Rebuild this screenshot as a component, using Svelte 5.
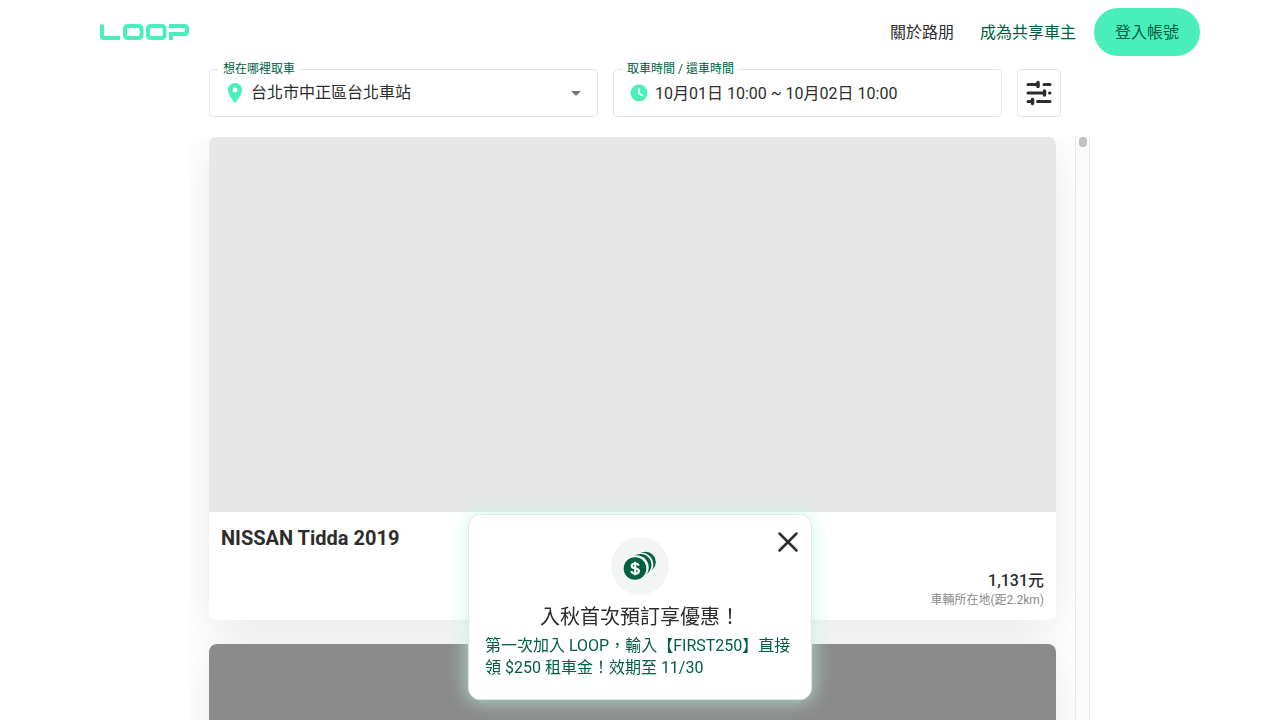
<script>
  let location = $state('taipei');
  let promoOpen = $state(true);
  const cars = [
    { name: 'NISSAN Tidda 2019', price: '1,131元', place: '車輛所在地(距2.2km)', tone: 'light' },
    { tone: 'dark' }
  ];
</script>

<div class="page">
  <header>
    <a class="logo" href="#home" aria-label="LOOP">
      <svg width="90" height="17" viewBox="0 0 90 17" fill="none" stroke="#4aefbb" stroke-width="4">
        <path d="M2 0.500V12.500Q2 14 3.500 14H20" />
        <rect x="25" y="2" width="16.500" height="12" rx="2.500" />
        <rect x="48" y="2" width="16.500" height="12" rx="2.500" />
        <path d="M69 2H84.500Q87 2 87 4.500V7.500Q87 10 84.500 10H71V16" />
      </svg>
    </a>
    <nav>
      <a href="#about">關於路朋</a>
      <a class="green" href="#owner">成為共享車主</a>
      <button class="login" type="button">登入帳號</button>
    </nav>
  </header>

  <main>
    <form class="search">
      <fieldset>
        <legend><label for="place">想在哪裡取車</label></legend>
        <svg width="24" height="24" viewBox="0 0 24 24" fill="#4aefbb">
          <path d="M12 2C8.130 2 5 5.130 5 9c0 5.250 7 13 7 13s7-7.750 7-13c0-3.870-3.130-7-7-7zm0 9.500a2.500 2.500 0 1 1 0-5 2.500 2.500 0 0 1 0 5z" />
        </svg>
        <select id="place" bind:value={location}>
          <option value="taipei">台北市中正區台北車站</option>
        </select>
        <svg width="24" height="24" viewBox="0 0 24 24" fill="#757575"><path d="M7 10l5 5 5-5z" /></svg>
      </fieldset>
      <fieldset>
        <legend><label for="time">取車時間 / 還車時間</label></legend>
        <svg width="24" height="24" viewBox="0 0 24 24">
          <circle cx="12" cy="12" r="8.500" fill="#4aefbb" />
          <path d="M12 7v5.500l4 2.200" fill="none" stroke="#fff" stroke-width="1.600" />
        </svg>
        <input id="time" type="text" readonly value="10月01日 10:00 ~ 10月02日 10:00" />
      </fieldset>
      <button class="filter" type="button" aria-label="篩選">
        <svg width="26" height="26" viewBox="0 0 26 26" fill="none" stroke="#2d2d2d" stroke-width="3" stroke-linecap="round">
          <path d="M2 4.500H12M18 4.500H24M2 13H18.500M23.500 13H24M2 21.500H6M11.500 21.500H24" />
          <path d="M12 2.500V6.500M18.500 11V15M6.500 19.500V23.500" stroke-width="3.500" />
        </svg>
      </button>
    </form>

    <div class="results">
      <div class="list">
        {#each cars as car}
          <article>
            <div class="photo {car.tone}"></div>
            {#if car.name}
              <div class="info">
                <h2>{car.name}</h2>
                <div class="cost">
                  <strong>{car.price}</strong>
                  <span>{car.place}</span>
                </div>
              </div>
            {/if}
          </article>
        {/each}
      </div>
      <div class="track"><div class="thumb"></div></div>
    </div>
  </main>

  {#if promoOpen}
    <aside>
      <button class="close" type="button" aria-label="關閉" onclick={() => (promoOpen = false)}>
        <svg width="20" height="20" viewBox="0 0 20 20" fill="none" stroke="#2d2d2d" stroke-width="2.500" stroke-linecap="round">
          <path d="M1.500 1.500l17 17M18.500 1.500l-17 17" />
        </svg>
      </button>
      <div class="coin">
        <svg width="34" height="30" viewBox="0 0 34 30" fill="#00603f">
          <circle cx="22.500" cy="11" r="10.300" />
          <circle cx="18.500" cy="13.500" r="11.800" fill="#f3f5f5" />
          <circle cx="17.500" cy="14" r="10.900" />
          <circle cx="13.500" cy="16.500" r="12.200" fill="#f3f5f5" />
          <circle cx="12" cy="17.500" r="11.300" />
          <path d="M15.700 14.700C15.200 13.100 13.800 12.500 12.200 12.500c-2 0-3.500.9-3.500 2.500 0 3.300 7.200 1.500 7.200 4.900 0 1.700-1.600 2.600-3.600 2.600-2.200 0-3.600-.9-4-2.600M12.200 10.700v13.600" fill="none" stroke="#f3f5f5" stroke-width="2.200" />
        </svg>
      </div>
      <h3>入秋首次預訂享優惠！</h3>
      <p>第一次加入 LOOP，輸入【FIRST250】直接領 $250 租車金！效期至 11/30</p>
    </aside>
  {/if}
</div>

<style>
  :global(body) {
    background: #fff;
  }
  .page,
  .page * {
    box-sizing: border-box;
  }
  .page {
    height: 100vh;
    display: flex;
    flex-direction: column;
    overflow: hidden;
    color: #2d2d2d;
    font-family: Roboto, 'Noto Sans CJK TC', sans-serif;
    font-size: 16px;
    line-height: 22px;
  }
  button,
  input,
  select {
    font: inherit;
    color: inherit;
    border: 0;
    background: none;
    padding: 0;
    margin: 0;
    outline: 0;
  }
  button {
    cursor: pointer;
  }
  svg {
    display: block;
    flex: none;
  }
  header {
    height: 64px;
    flex: none;
    display: flex;
    align-items: center;
    justify-content: space-between;
    padding: 0 80px 0 100px;
  }
  nav {
    display: flex;
    align-items: center;
    gap: 26px;
  }
  nav a {
    padding-top: 2px;
    color: #2d2d2d;
    text-decoration: none;
  }
  nav .green {
    color: #00603f;
  }
  .login {
    height: 48px;
    margin-left: -8px;
    padding: 2px 21px 0;
    border-radius: 24px;
    background: #4aefbb;
    color: #00603f;
  }
  main {
    flex: 1;
    min-height: 0;
    width: 100%;
    max-width: 900px;
    margin: 0 auto;
    display: flex;
    flex-direction: column;
  }
  .search {
    display: flex;
    align-items: flex-end;
    gap: 15px;
    margin: 0 29px 20px 19px;
  }
  fieldset {
    flex: 1;
    min-width: 0;
    height: 53px;
    margin: 0;
    padding: 0 9px 4px 13px;
    border: 1px solid #e5e5e5;
    border-radius: 4px;
    display: flex;
    align-items: center;
    gap: 4px;
  }
  legend {
    height: 10px;
    margin-left: -5px;
    padding: 0 5px;
    font-size: 12px;
    line-height: 10px;
    color: #00603f;
  }
  select,
  input {
    flex: 1;
    min-width: 0;
    height: 36px;
    appearance: none;
  }
  input {
    padding-bottom: 2px;
  }
  .filter {
    flex: none;
    width: 44px;
    height: 48px;
    display: grid;
    place-items: center;
    border: 1px solid #e5e5e5;
    border-radius: 4px;
  }
  .results {
    flex: 1;
    min-height: 0;
    display: flex;
    overflow: hidden;
  }
  .list {
    flex: 1;
    min-width: 0;
    overflow: hidden;
    padding: 0 19px;
    display: flex;
    flex-direction: column;
    gap: 24px;
  }
  article {
    flex: none;
    border-radius: 8px;
    background: #fff;
    box-shadow: 0 10px 50px rgba(0, 0, 0, 0.09);
  }
  .photo {
    height: 375px;
    border-radius: 8px 8px 0 0;
  }
  .light {
    background: #e7e7e7;
  }
  .dark {
    background: #8b8b8b;
  }
  .info {
    padding: 12px;
  }
  h2 {
    margin: 0;
    font-size: 20px;
    line-height: 28px;
    font-weight: 700;
  }
  .cost {
    margin-top: 18px;
    display: flex;
    flex-direction: column;
    align-items: flex-end;
  }
  .cost strong {
    font-weight: 500;
  }
  .cost span {
    font-size: 12px;
    line-height: 16px;
    color: #8a8a8a;
  }
  .track {
    width: 15px;
    padding: 0 3px;
    background: #fafafa;
    border: 1px solid #e8e8e8;
    border-width: 0 1px;
  }
  .thumb {
    width: 8px;
    height: 10px;
    border-radius: 4px;
    background: #c1c1c1;
  }
  aside {
    position: fixed;
    left: 50%;
    bottom: 20px;
    transform: translateX(-50%);
    width: 344px;
    padding: 22px 16px 20px;
    border: 1px solid #e0e8e5;
    border-radius: 12px;
    background: #fff;
    box-shadow: 0 0 20px rgba(190, 245, 226, 0.8);
  }
  .close {
    position: absolute;
    top: 17px;
    right: 13px;
  }
  .coin {
    width: 58px;
    height: 58px;
    margin: 0 auto 8px;
    border-radius: 50%;
    display: grid;
    place-items: center;
    background: #f3f5f5;
  }
  h3 {
    margin: 0 0 4px;
    font-size: 20px;
    line-height: 28px;
    font-weight: 400;
    text-align: center;
  }
  p {
    margin: 0;
    color: #00603f;
  }
</style>
